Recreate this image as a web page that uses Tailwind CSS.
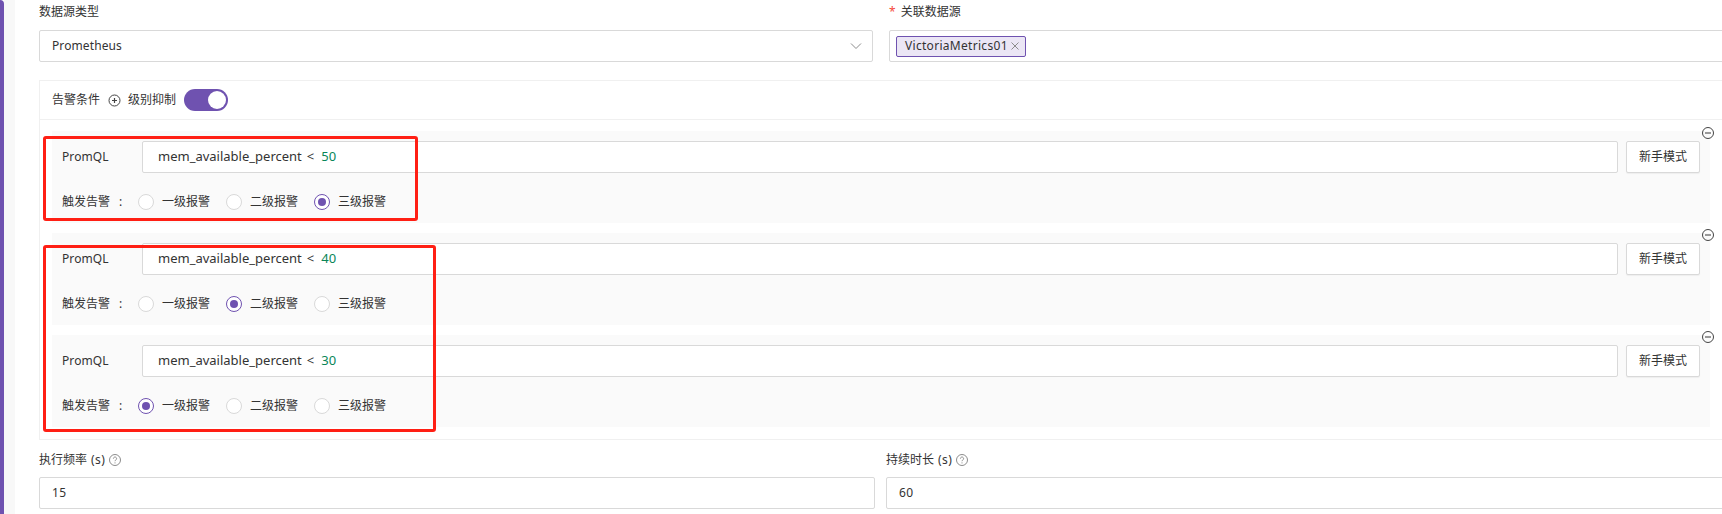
<!DOCTYPE html>
<html lang="zh-CN">
<head>
    <meta charset="UTF-8">
    <title>告警规则</title>
    <script src="https://cdn.jsdelivr.net/npm/@tailwindcss/browser@4"></script>
</head>
<body class="w-[1722px] h-[514px] overflow-hidden bg-white text-[#333] text-[12px] font-['Noto_Sans','Noto_Sans_CJK_SC',sans-serif]">
<div class="relative flex h-[514px]">
    <!-- left strip -->
    <div class="w-[4px] bg-[#6f52b0] rounded-tr-[4px]"></div>
    <div class="w-[11px] bg-[#f8f8f8]"></div>

    <main class="flex-1 min-w-0 pl-[24px] overflow-hidden">
        <!-- data source -->
        <div class="flex gap-[16px]">
            <div class="w-[834px] shrink-0">
                <div class="h-[24px] leading-[24px] mb-[6px]">数据源类型</div>
                <div class="h-[32px] flex items-center justify-between pl-[12px] pr-[10px] border border-[#d9d9d9] rounded-[2px] tracking-[0.1px]">
                    <span>Prometheus</span>
                    <svg class="w-[12px] h-[12px] text-[#8c8c8c]" viewBox="0 0 12 12" fill="none" stroke="currentColor" stroke-width="1"><path d="M1 3.5 6 8.5 11 3.5"/></svg>
                </div>
            </div>
            <div class="w-[900px] shrink-0">
                <div class="h-[24px] leading-[24px] mb-[6px]"><span class="text-[#f5483b] mr-[5px]">*</span>关联数据源</div>
                <div class="h-[32px] flex items-center px-[6px] border border-[#d9d9d9] rounded-[2px]">
                    <span class="h-[21px] w-[130px] flex items-center justify-between pl-[8px] pr-[6px] bg-[#ebe6f5] border border-[#6f52b0] rounded-[2px] tracking-[0.3px]">
                        VictoriaMetrics01
                        <svg class="w-[8px] h-[8px] text-[#8c8c8c]" viewBox="0 0 8 8" fill="none" stroke="currentColor" stroke-width="1"><path d="M.5.5l7 7M7.5.5l-7 7"/></svg>
                    </span>
                </div>
            </div>
        </div>

        <!-- alert conditions -->
        <div class="w-[1700px] mt-[18px] border border-[#f0f0f0]">
            <div class="h-[39px] flex items-center pl-[12px] border-b border-[#f0f0f0]">
                <span>告警条件</span>
                <svg class="w-[13px] h-[13px] ml-[8px] text-[#444]" viewBox="0 0 13 13" fill="none" stroke="currentColor"><circle cx="6.5" cy="6.5" r="5.5"/><path d="M4 6.5h5M6.5 4v5" stroke-width="1.2"/></svg>
                <span class="ml-[7px]">级别抑制</span>
                <span class="ml-[8px] w-[44px] h-[22px] flex items-center justify-end pr-[2px] rounded-full bg-[#6f52b0]">
                    <span class="w-[18px] h-[18px] rounded-full bg-white"></span>
                </span>
            </div>

            <div class="pt-[11px] pb-[12px] pl-[12px] flex flex-col gap-[10px]">
                <!-- level 3 -->
                <div class="relative w-[1658px] h-[92px] pt-[10px] pl-[10px] pr-[10px] bg-[#fafafa]">
                    <svg class="absolute right-[-4px] top-[-4px] w-[12px] h-[12px] text-[#444]" viewBox="0 0 12 12" fill="none"><circle cx="6" cy="6" r="5.5" stroke="currentColor"/><path d="M3 6h6" stroke="#999" stroke-width="2"/></svg>
                    <div class="flex items-center">
                        <span class="w-[80px] tracking-[0.1px]">PromQL</span>
                        <div class="flex-1 h-[32px] flex items-center pl-[15px] bg-white border border-[#d9d9d9] rounded-[2px] text-[13px]">mem_available_percent<span class="ml-[5px]">&lt;</span><span class="ml-[7px] text-[#098658]">50</span></div>
                        <div class="w-[74px] h-[32px] ml-[8px] flex items-center justify-center bg-white border border-[#d9d9d9] rounded-[2px] shadow-[0_1px_1px_rgba(0,0,0,0.05)]">新手模式</div>
                    </div>
                    <div class="flex items-center h-[24px] mt-[17px]">
                        <span class="w-[76px]">触发告警<span class="ml-[9px]">:</span></span>
                        <span class="w-[16px] h-[16px] rounded-full border border-[#d9d9d9] bg-white"></span><span class="ml-[8px] w-[64px]">一级报警</span>
                        <span class="w-[16px] h-[16px] rounded-full border border-[#d9d9d9] bg-white"></span><span class="ml-[8px] w-[64px]">二级报警</span>
                        <span class="w-[16px] h-[16px] flex items-center justify-center rounded-full border border-[#6f52b0] bg-white"><span class="w-[8px] h-[8px] rounded-full bg-[#6f52b0]"></span></span><span class="ml-[8px] w-[64px]">三级报警</span>
                    </div>
                </div>

                <!-- level 2 -->
                <div class="relative w-[1658px] h-[92px] pt-[10px] pl-[10px] pr-[10px] bg-[#fafafa]">
                    <svg class="absolute right-[-4px] top-[-4px] w-[12px] h-[12px] text-[#444]" viewBox="0 0 12 12" fill="none"><circle cx="6" cy="6" r="5.5" stroke="currentColor"/><path d="M3 6h6" stroke="#999" stroke-width="2"/></svg>
                    <div class="flex items-center">
                        <span class="w-[80px] tracking-[0.1px]">PromQL</span>
                        <div class="flex-1 h-[32px] flex items-center pl-[15px] bg-white border border-[#d9d9d9] rounded-[2px] text-[13px]">mem_available_percent<span class="ml-[5px]">&lt;</span><span class="ml-[7px] text-[#098658]">40</span></div>
                        <div class="w-[74px] h-[32px] ml-[8px] flex items-center justify-center bg-white border border-[#d9d9d9] rounded-[2px] shadow-[0_1px_1px_rgba(0,0,0,0.05)]">新手模式</div>
                    </div>
                    <div class="flex items-center h-[24px] mt-[17px]">
                        <span class="w-[76px]">触发告警<span class="ml-[9px]">:</span></span>
                        <span class="w-[16px] h-[16px] rounded-full border border-[#d9d9d9] bg-white"></span><span class="ml-[8px] w-[64px]">一级报警</span>
                        <span class="w-[16px] h-[16px] flex items-center justify-center rounded-full border border-[#6f52b0] bg-white"><span class="w-[8px] h-[8px] rounded-full bg-[#6f52b0]"></span></span><span class="ml-[8px] w-[64px]">二级报警</span>
                        <span class="w-[16px] h-[16px] rounded-full border border-[#d9d9d9] bg-white"></span><span class="ml-[8px] w-[64px]">三级报警</span>
                    </div>
                </div>

                <!-- level 1 -->
                <div class="relative w-[1658px] h-[92px] pt-[10px] pl-[10px] pr-[10px] bg-[#fafafa]">
                    <svg class="absolute right-[-4px] top-[-4px] w-[12px] h-[12px] text-[#444]" viewBox="0 0 12 12" fill="none"><circle cx="6" cy="6" r="5.5" stroke="currentColor"/><path d="M3 6h6" stroke="#999" stroke-width="2"/></svg>
                    <div class="flex items-center">
                        <span class="w-[80px] tracking-[0.1px]">PromQL</span>
                        <div class="flex-1 h-[32px] flex items-center pl-[15px] bg-white border border-[#d9d9d9] rounded-[2px] text-[13px]">mem_available_percent<span class="ml-[5px]">&lt;</span><span class="ml-[7px] text-[#098658]">30</span></div>
                        <div class="w-[74px] h-[32px] ml-[8px] flex items-center justify-center bg-white border border-[#d9d9d9] rounded-[2px] shadow-[0_1px_1px_rgba(0,0,0,0.05)]">新手模式</div>
                    </div>
                    <div class="flex items-center h-[24px] mt-[17px]">
                        <span class="w-[76px]">触发告警<span class="ml-[9px]">:</span></span>
                        <span class="w-[16px] h-[16px] flex items-center justify-center rounded-full border border-[#6f52b0] bg-white"><span class="w-[8px] h-[8px] rounded-full bg-[#6f52b0]"></span></span><span class="ml-[8px] w-[64px]">一级报警</span>
                        <span class="w-[16px] h-[16px] rounded-full border border-[#d9d9d9] bg-white"></span><span class="ml-[8px] w-[64px]">二级报警</span>
                        <span class="w-[16px] h-[16px] rounded-full border border-[#d9d9d9] bg-white"></span><span class="ml-[8px] w-[64px]">三级报警</span>
                    </div>
                </div>
            </div>
        </div>

        <!-- frequency and duration -->
        <div class="flex gap-[11px] mt-[8px]">
            <div class="w-[836px] shrink-0">
                <div class="h-[24px] flex items-center mb-[5px]"><span>执行频率</span><span class="ml-[4px] tracking-[0.5px]">(s)</span>
                    <svg class="w-[12px] h-[12px] ml-[4px] text-[#8c8c8c]" viewBox="0 0 12 12" fill="none" stroke="currentColor"><circle cx="6" cy="6" r="5.5"/><path d="M4.4 4.6a1.6 1.6 0 1 1 2.4 1.4c-.6.3-.8.6-.8 1.2M6 8.4v1"/></svg>
                </div>
                <div class="h-[32px] flex items-center px-[12px] border border-[#d9d9d9] rounded-[2px] tracking-[0.5px]">15</div>
            </div>
            <div class="w-[900px] shrink-0">
                <div class="h-[24px] flex items-center mb-[5px]"><span>持续时长</span><span class="ml-[4px] tracking-[0.5px]">(s)</span>
                    <svg class="w-[12px] h-[12px] ml-[4px] text-[#8c8c8c]" viewBox="0 0 12 12" fill="none" stroke="currentColor"><circle cx="6" cy="6" r="5.5"/><path d="M4.4 4.6a1.6 1.6 0 1 1 2.4 1.4c-.6.3-.8.6-.8 1.2M6 8.4v1"/></svg>
                </div>
                <div class="h-[32px] flex items-center px-[12px] border border-[#d9d9d9] rounded-[2px] tracking-[0.5px]">60</div>
            </div>
        </div>
    </main>

    <!-- red annotation boxes -->
    <div class="absolute left-[43px] top-[136px] w-[375px] h-[85px] border-[3px] border-[#ff1f14] rounded-[3px]"></div>
    <div class="absolute left-[43px] top-[245px] w-[393px] h-[187px] border-[3px] border-[#ff1f14] rounded-[3px]"></div>
</div>
</body>
</html>
